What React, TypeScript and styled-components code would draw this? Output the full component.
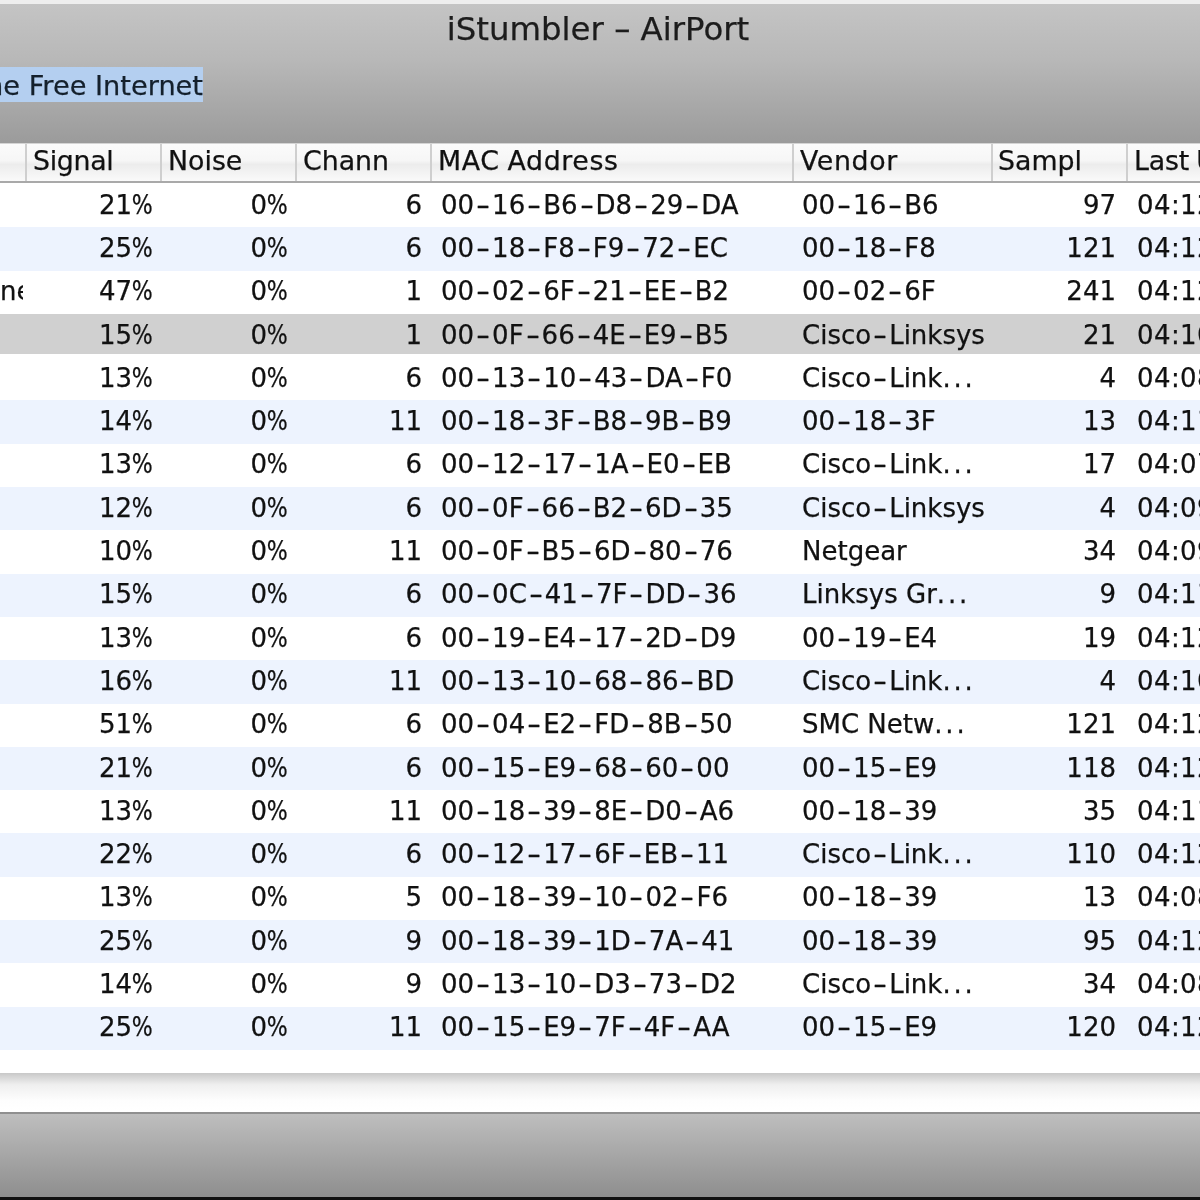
import React from 'react';
import styled, { createGlobalStyle } from 'styled-components';

const GlobalStyle = createGlobalStyle`
  html, body {
    margin: 0;
    padding: 0;
    background: #fff;
  }
  body {
    font-family: 'DejaVu Sans', Verdana, sans-serif;
    color: #111;
    -webkit-text-stroke: 0.25px currentColor;
  }
`;

const COLUMNS = '25px 135px 135px 135px 362px 199px 135px 74px';

const Window = styled.div`
  width: 1200px;
  height: 1200px;
  overflow: hidden;
  display: flex;
  flex-direction: column;
  filter: blur(0.6px);
`;

const TopBar = styled.div`
  height: 143px;
  box-sizing: border-box;
  border-top: 4px solid #eeeeee;
  background: linear-gradient(#c4c4c4, #b8b8b8 40%, #9b9b9b);
  display: flex;
  flex-direction: column;
`;

const WindowTitle = styled.div`
  height: 50px;
  line-height: 50px;
  text-align: center;
  font-size: 32.4px;
  color: #1c1c1c;
  padding-right: 4px;
`;

const Toolbar = styled.div`
  padding-top: 13px;
  display: flex;
`;

const Selection = styled.div`
  width: 203px;
  height: 35px;
  background: #b4cff0;
  display: flex;
  justify-content: flex-end;
  overflow: hidden;
  white-space: nowrap;
  font-size: 27.2px;
  line-height: 37px;
  color: #14202c;
`;

const HeaderRow = styled.div`
  height: 40px;
  box-sizing: border-box;
  display: grid;
  grid-template-columns: ${COLUMNS};
  border-top: 1px solid #d4d4d4;
  border-bottom: 2px solid #a9a9a9;
  background: linear-gradient(#fbfbfb, #f6f6f6 45%, #ececec 55%, #fafafa);
`;

const HeaderCell = styled.div<{ $inset: number; $tracking: number }>`
  border-left: 2px solid #cfcfcf;
  padding-left: ${p => p.$inset}px;
  font-size: 26.8px;
  letter-spacing: ${p => p.$tracking}px;
  word-spacing: -1px;
  line-height: 34px;
  white-space: nowrap;
  overflow: hidden;
  &:first-child {
    border-left: 0;
  }
`;

const Table = styled.div`
  padding-top: 1px;
  height: 890px;
  box-sizing: border-box;
  background: #fff;
`;

const Row = styled.div<{ $striped: boolean; $selected: boolean }>`
  height: 43.3px;
  display: grid;
  grid-template-columns: ${COLUMNS};
  align-items: center;
  background: ${p => (p.$selected ? '#d0d0d0' : p.$striped ? '#edf3fe' : '#fff')};
  box-shadow: ${p => (p.$selected ? 'inset 0 -3px 0 #fff' : 'none')};
`;

const Cell = styled.div<{ $right?: boolean; $inset: number }>`
  font-size: 26px;
  line-height: 38px;
  height: 40px;
  white-space: nowrap;
  overflow: hidden;
  text-align: ${p => (p.$right ? 'right' : 'left')};
  padding: ${p => (p.$right ? `0 ${p.$inset}px 0 0` : `0 0 0 ${p.$inset}px`)};
`;

const NameCell = styled(Cell)`
  width: 23px;
  padding: 0;
`;

const TimeCell = styled(Cell)`
  letter-spacing: 0.4px;
`;

// Lucida's hyphen is far wider than DejaVu's
const Hyphen = styled.span`
  display: inline-block;
  width: 18px;
  text-align: center;
  transform: scaleX(1.5);
`;

const Percent = styled.span`
  display: inline-block;
  margin-left: -3.7px;
  transform: scaleX(0.85);
  transform-origin: right center;
`;

const Dots = styled.span`
  letter-spacing: 2.8px;
`;

const SheetShadow = styled.div`
  height: 41px;
  background: linear-gradient(#c8c8c8, #efefef 30%, #fdfdfd 70%, #fff);
  border-bottom: 2px solid #8f8f8f;
  box-sizing: border-box;
`;

const BottomBar = styled.div`
  flex: 1;
  background: linear-gradient(#bebebe, #8e8e8e);
  border-bottom: 3px solid #111;
`;

type Network = [string, string, string, string, string, string, string];

const networks: Network[] = [
  ['', '21%', '6', '00-16-B6-D8-29-DA', '00-16-B6', '97', '04:12'],
  ['', '25%', '6', '00-18-F8-F9-72-EC', '00-18-F8', '121', '04:12'],
  ['ne', '47%', '1', '00-02-6F-21-EE-B2', '00-02-6F', '241', '04:12'],
  ['', '15%', '1', '00-0F-66-4E-E9-B5', 'Cisco-Linksys', '21', '04:10'],
  ['', '13%', '6', '00-13-10-43-DA-F0', 'Cisco-Link...', '4', '04:08'],
  ['', '14%', '11', '00-18-3F-B8-9B-B9', '00-18-3F', '13', '04:11'],
  ['', '13%', '6', '00-12-17-1A-E0-EB', 'Cisco-Link...', '17', '04:07'],
  ['', '12%', '6', '00-0F-66-B2-6D-35', 'Cisco-Linksys', '4', '04:09'],
  ['', '10%', '11', '00-0F-B5-6D-80-76', 'Netgear', '34', '04:09'],
  ['', '15%', '6', '00-0C-41-7F-DD-36', 'Linksys Gr...', '9', '04:11'],
  ['', '13%', '6', '00-19-E4-17-2D-D9', '00-19-E4', '19', '04:12'],
  ['', '16%', '11', '00-13-10-68-86-BD', 'Cisco-Link...', '4', '04:10'],
  ['', '51%', '6', '00-04-E2-FD-8B-50', 'SMC Netw...', '121', '04:12'],
  ['', '21%', '6', '00-15-E9-68-60-00', '00-15-E9', '118', '04:12'],
  ['', '13%', '11', '00-18-39-8E-D0-A6', '00-18-39', '35', '04:11'],
  ['', '22%', '6', '00-12-17-6F-EB-11', 'Cisco-Link...', '110', '04:12'],
  ['', '13%', '5', '00-18-39-10-02-F6', '00-18-39', '13', '04:08'],
  ['', '25%', '9', '00-18-39-1D-7A-41', '00-18-39', '95', '04:12'],
  ['', '14%', '9', '00-13-10-D3-73-D2', 'Cisco-Link...', '34', '04:08'],
  ['', '25%', '11', '00-15-E9-7F-4F-AA', '00-15-E9', '120', '04:12'],
];

const headers: [string, number, number][] = [
  ['', 0, 0],
  ['Signal', 6, -0.3],
  ['Noise', 6, 0],
  ['Chann', 6, 0],
  ['MAC Address', 6, 0.6],
  ['Vendor', 6, 0.6],
  ['Sampl', 5, 0],
  ['Last Update', 6, -0.2],
];

const glyphs = (text: string) =>
  text.split(/(-|%|\.\.\.)/).map((part, i) => {
    if (part === '-') return <Hyphen key={i}>-</Hyphen>;
    if (part === '%') return <Percent key={i}>%</Percent>;
    if (part === '...') return <Dots key={i}>...</Dots>;
    return part;
  });

export default function App() {
  return (
    <Window>
      <GlobalStyle />
      <TopBar>
        <WindowTitle>iStumbler – AirPort</WindowTitle>
        <Toolbar>
          <Selection>The Free Internet</Selection>
        </Toolbar>
      </TopBar>
      <HeaderRow>
        {headers.map(([label, inset, tracking]) => (
          <HeaderCell key={label} $inset={inset} $tracking={tracking}>{label}</HeaderCell>
        ))}
      </HeaderRow>
      <Table>
        {networks.map((n, i) => (
          <Row key={n[3]} $striped={i % 2 === 1} $selected={i === 3}>
            <NameCell $inset={0}>{n[0]}</NameCell>
            <Cell $right $inset={7}>{glyphs(n[1])}</Cell>
            <Cell $right $inset={7}>{glyphs('0%')}</Cell>
            <Cell $right $inset={8}>{n[2]}</Cell>
            <Cell $inset={11}>{glyphs(n[3])}</Cell>
            <Cell $inset={10}>{glyphs(n[4])}</Cell>
            <Cell $right $inset={10}>{n[5]}</Cell>
            <TimeCell $inset={11}>{n[6]}</TimeCell>
          </Row>
        ))}
      </Table>
      <SheetShadow />
      <BottomBar />
    </Window>
  );
}
